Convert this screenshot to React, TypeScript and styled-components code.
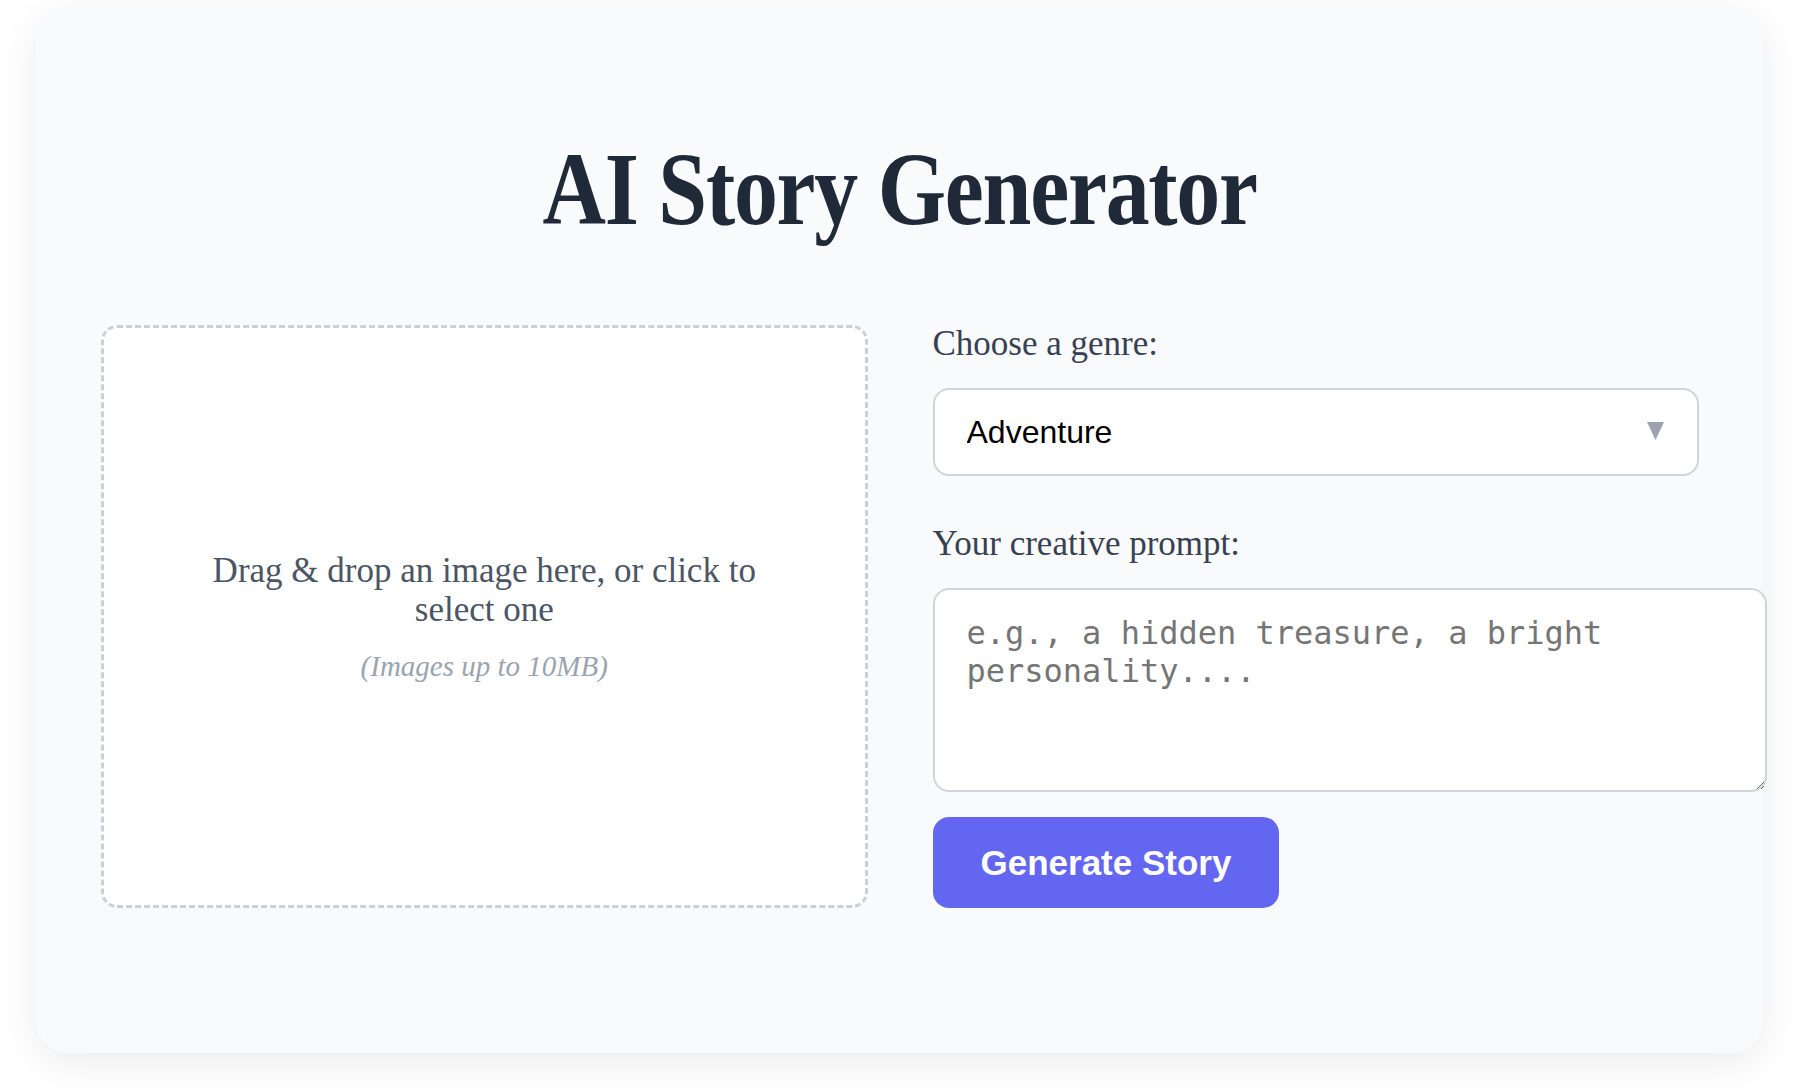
import React from "react";
import styled, { createGlobalStyle } from "styled-components";

const GlobalStyle = createGlobalStyle`
  html, body {
    margin: 0;
    padding: 0;
    background: #ffffff;
  }
  * {
    box-sizing: border-box;
  }
`;

const Page = styled.div`
  padding: 6px 43px 36px 36px;
  font-family: "Liberation Serif", "Times New Roman", serif;
`;

const Card = styled.main`
  background: #f9fafb;
  border-radius: 32px;
  box-shadow: 0 10px 40px rgba(0, 0, 0, 0.08);
  padding: 64px 64px 145px 65px;
`;

const Title = styled.h1`
  margin: 57px 0 74px;
  text-align: center;
  font-family: "Liberation Serif", "Times New Roman", serif;
  font-weight: 700;
  font-size: 104px;
  line-height: 124px;
  color: #1f2937;
`;

const TitleText = styled.span`
  display: inline-block;
  letter-spacing: -1.5px;
  transform: scaleX(0.845);
  transform-origin: center;
  white-space: nowrap;
`;

const Columns = styled.div`
  display: grid;
  grid-template-columns: 1fr 1fr;
  column-gap: 65px;
  align-items: stretch;
`;

const DropZone = styled.div`
  display: flex;
  flex-direction: column;
  align-items: center;
  justify-content: center;
  background: #ffffff;
  border: 3px dashed #cbd0d8;
  border-radius: 16px;
  padding: 32px 64px;
  text-align: center;
  cursor: pointer;
`;

const DropText = styled.p`
  margin: 0;
  font-size: 35px;
  line-height: 39px;
  color: #4b5563;
  max-width: 560px;
`;

const DropHint = styled.p`
  margin: 21px 0 0;
  font-size: 29px;
  line-height: 32px;
  font-style: italic;
  color: #9ca3af;
`;

const Form = styled.div`
  display: flex;
  flex-direction: column;
  align-items: flex-start;
  margin-top: -1px;
`;

const Label = styled.label<{ $spaced?: boolean }>`
  display: block;
  font-size: 35px;
  line-height: 40px;
  color: #374151;
  margin: ${(p) => (p.$spaced ? "48px" : "0")} 0 24px;
`;

const SelectWrap = styled.div`
  position: relative;
  width: 100%;
`;

const Select = styled.select`
  appearance: none;
  -webkit-appearance: none;
  display: block;
  width: 100%;
  height: 88px;
  padding: 0 80px 0 32px;
  border: 2px solid #d1d5db;
  border-radius: 16px;
  background: #ffffff;
  font-family: "Liberation Sans", Arial, sans-serif;
  font-size: 32px;
  color: #000000;
  outline: none;
`;

const Arrow = styled.svg`
  position: absolute;
  right: 35px;
  top: 34px;
  width: 17px;
  height: 18px;
  pointer-events: none;
`;

const Prompt = styled.textarea`
  box-sizing: content-box;
  display: block;
  width: 100%;
  height: 152px;
  padding: 24px 32px;
  border: 2px solid #d1d5db;
  border-radius: 16px;
  background: #ffffff;
  font-family: "DejaVu Sans Mono", monospace;
  font-size: 32px;
  color: #111827;
  outline: none;
  margin: 0;

  &::placeholder {
    color: #757575;
  }
`;

const GenerateButton = styled.button`
  margin-top: 25px;
  padding: 25px 48px;
  border: none;
  border-radius: 16px;
  background: #6366f1;
  color: #ffffff;
  font-family: "Liberation Sans", Arial, sans-serif;
  font-weight: 700;
  font-size: 35px;
  line-height: 41px;
  cursor: pointer;
`;

export default function App() {
  return (
    <>
      <GlobalStyle />
      <Page>
        <Card>
          <Title>
            <TitleText>AI Story Generator</TitleText>
          </Title>
          <Columns>
            <DropZone>
              <DropText>Drag &amp; drop an image here, or click to select one</DropText>
              <DropHint>(Images up to 10MB)</DropHint>
            </DropZone>
            <Form>
              <Label htmlFor="genre">Choose a genre:</Label>
              <SelectWrap>
                <Select id="genre" defaultValue="Adventure">
                  <option>Adventure</option>
                  <option>Fantasy</option>
                  <option>Mystery</option>
                  <option>Science Fiction</option>
                  <option>Romance</option>
                </Select>
                <Arrow viewBox="0 0 17 18" aria-hidden="true">
                  <polygon points="0,0 17,0 8.5,18" fill="#9ca3af" />
                </Arrow>
              </SelectWrap>
              <Label htmlFor="prompt" $spaced>
                Your creative prompt:
              </Label>
              <Prompt
                id="prompt"
                placeholder="e.g., a hidden treasure, a bright personality...."
              />
              <GenerateButton>Generate Story</GenerateButton>
            </Form>
          </Columns>
        </Card>
      </Page>
    </>
  );
}
